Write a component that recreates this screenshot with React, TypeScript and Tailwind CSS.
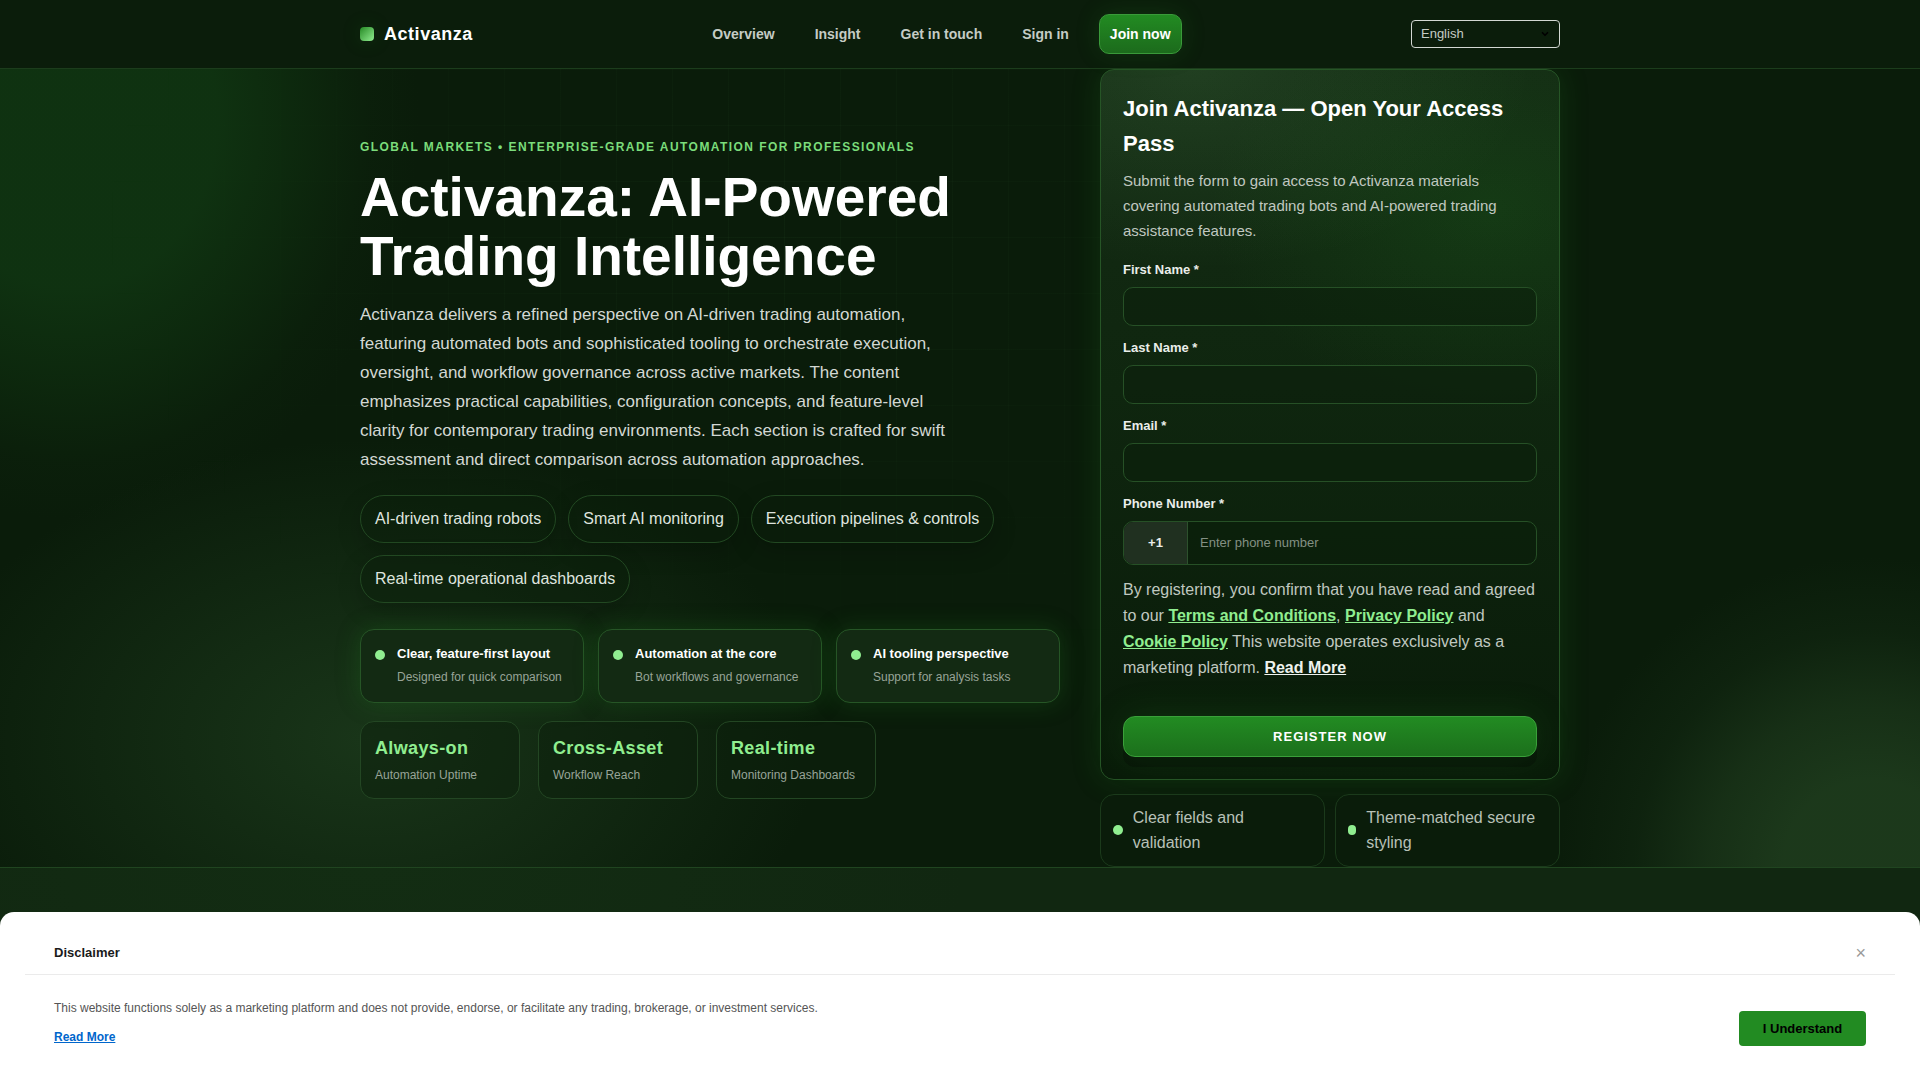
import { ChevronDown } from "lucide-react";

const navLinks = ["Overview", "Insight", "Get in touch", "Sign in"];

const chips = [
  "AI-driven trading robots",
  "Smart AI monitoring",
  "Execution pipelines & controls",
  "Real-time operational dashboards",
];

const features = [
  { title: "Clear, feature-first layout", text: "Designed for quick comparison" },
  { title: "Automation at the core", text: "Bot workflows and governance" },
  { title: "AI tooling perspective", text: "Support for analysis tasks" },
];

const stats = [
  { value: "Always-on", label: "Automation Uptime" },
  { value: "Cross-Asset", label: "Workflow Reach" },
  { value: "Real-time", label: "Monitoring Dashboards" },
];

const fields = [
  { id: "first-name", label: "First Name *", type: "text" },
  { id: "last-name", label: "Last Name *", type: "text" },
  { id: "email", label: "Email *", type: "email" },
];

const Header = () => {
  return (
    <header className="relative z-10 border-b border-[#1c3d1c] bg-[#0b1d0b]">
      <div className="mx-auto flex h-[68px] max-w-[1200px] items-center justify-between">
        <a href="#" className="flex items-center gap-[10px] text-lg font-bold tracking-[0.03em] text-white">
          <span className="h-[14px] w-[14px] rounded bg-linear-135 from-[#228b22] to-[#90ee90] shadow-[0_0_20px_rgba(34,139,34,0.2)]"></span>
          Activanza
        </a>
        <nav className="flex items-center gap-5 text-sm font-bold text-[#c5ccc5]">
          {navLinks.map((link) => (
            <a key={link} href="#" className="px-[10px] py-2">
              {link}
            </a>
          ))}
          <a
            href="#"
            className="flex h-10 items-center rounded-[10px] border border-[#3a9a3a] bg-linear-to-b from-[#228b22] to-[#1c6b1c] px-[10px] text-white shadow-[0_0_24px_rgba(34,139,34,0.2)]"
          >
            Join now
          </a>
        </nav>
        <div className="relative">
          <select
            aria-label="Language"
            className="h-7 w-[149px] appearance-none rounded border border-[#d3d8d3] bg-transparent px-[9px] text-[13px] text-[#c5ccc5]"
          >
            <option>English</option>
          </select>
          <ChevronDown className="pointer-events-none absolute top-[9px] right-[10px] h-[10px] w-[10px] text-black" strokeWidth={4} />
        </div>
      </div>
    </header>
  );
};

const Intro = () => {
  return (
    <div className="self-center">
      <p className="text-xs leading-5 font-bold tracking-[0.12em] text-[#7bdc7b]">
        GLOBAL MARKETS • ENTERPRISE-GRADE AUTOMATION FOR PROFESSIONALS
      </p>
      <h1 className="mt-[11px] max-w-[640px] text-[55px] leading-[59px] font-bold text-white">
        Activanza: AI-Powered Trading Intelligence
      </h1>
      <p className="mt-[14px] max-w-[600px] text-[17px] leading-[29px] text-[#d3d8d3]">
        Activanza delivers a refined perspective on AI-driven trading automation, featuring automated bots and
        sophisticated tooling to orchestrate execution, oversight, and workflow governance across active markets. The
        content emphasizes practical capabilities, configuration concepts, and feature-level clarity for contemporary
        trading environments. Each section is crafted for swift assessment and direct comparison across automation
        approaches.
      </p>
      <ul className="mt-[21px] flex flex-wrap gap-3">
        {chips.map((chip) => (
          <li
            key={chip}
            className="rounded-full border border-[#224822] bg-[#0b1f0b66] px-[14px] py-[10px] text-base leading-[26px] text-[#dfe4df] shadow-[0_8px_24px_rgba(0,0,0,0.2)]"
          >
            {chip}
          </li>
        ))}
      </ul>
      <div className="mt-[26px] grid grid-cols-3 gap-[14px]">
        {features.map((feature) => (
          <div
            key={feature.title}
            className="flex gap-3 rounded-[14px] border border-[#265526] bg-[#132a13] px-[14px] pt-3 pb-[13px] shadow-[0_0_24px_rgba(34,139,34,0.25)]"
          >
            <span className="mt-2 h-[10px] w-[10px] shrink-0 rounded-full bg-[#90ee90]"></span>
            <div className="whitespace-nowrap">
              <h3 className="text-[13px] leading-6 font-bold text-white">{feature.title}</h3>
              <p className="text-xs leading-[23px] text-[#98a498]">{feature.text}</p>
            </div>
          </div>
        ))}
      </div>
      <div className="mt-[18px] flex gap-[18px]">
        {stats.map((stat) => (
          <div
            key={stat.value}
            className="h-[78px] w-[160px] rounded-[14px] border border-[#234623] bg-[#0c200c80] px-[14px] pt-[11px]"
          >
            <p className="text-lg leading-[30px] font-bold tracking-[0.02em] text-[#90ee90]">{stat.value}</p>
            <p className="text-xs leading-6 whitespace-nowrap text-[#98a498]">{stat.label}</p>
          </div>
        ))}
      </div>
    </div>
  );
};

const RegisterForm = () => {
  return (
    <form className="rounded-[14px] border border-[#265526] bg-[radial-gradient(ellipse_340px_200px_at_20%_0%,rgba(144,238,144,0.1),transparent),radial-gradient(ellipse_280px_200px_at_85%_140px,rgba(34,139,34,0.18),transparent),linear-gradient(180deg,#142b14,#0f260f_45%,#091b09)] px-[22px] pt-[21px] pb-[22px] shadow-[0_0_30px_rgba(34,139,34,0.2)]">
      <h2 className="text-[22px] leading-[35px] font-bold text-white">
        Join Activanza — Open Your Access Pass
      </h2>
      <p className="mt-[7px] text-[15px] leading-[25px] text-[#c0c8c0]">
        Submit the form to gain access to Activanza materials covering automated trading bots and AI-powered trading
        assistance features.
      </p>
      <div className="mt-[17px] flex flex-col gap-3">
        {fields.map((field) => (
          <div key={field.id} className="flex flex-col gap-[7px]">
            <label htmlFor={field.id} className="text-[13px] leading-5 font-bold text-[#eaeeea]">
              {field.label}
            </label>
            <input
              id={field.id}
              type={field.type}
              className="h-[39px] rounded-[10px] border border-[#265026] bg-[#0c200c99] px-3 text-[13px] text-white"
            />
          </div>
        ))}
        <div className="flex flex-col gap-[7px]">
          <label htmlFor="phone" className="text-[13px] leading-5 font-bold text-[#eaeeea]">
            Phone Number *
          </label>
          <div className="flex h-11 overflow-hidden rounded-[10px] border border-[#265026] bg-[#0c200cb3]">
            <span className="flex w-16 items-center justify-center border-r border-[#2d512d] bg-[#203020] text-[13px] font-bold text-[#eaeeea]">
              +1
            </span>
            <input
              id="phone"
              type="tel"
              placeholder="Enter phone number"
              className="min-w-0 grow bg-transparent px-3 text-[13px] text-white placeholder:text-[#839083]"
            />
          </div>
        </div>
      </div>
      <p className="mt-3 text-base leading-[26px] text-[#c0c8c0]">
        By registering, you confirm that you have read and agreed to our{" "}
        <a href="#" className="font-bold text-[#90ee90] underline">Terms and Conditions</a>,{" "}
        <a href="#" className="font-bold text-[#90ee90] underline">Privacy Policy</a> and{" "}
        <a href="#" className="font-bold text-[#90ee90] underline">Cookie Policy</a> This website operates exclusively
        as a marketing platform.{" "}
        <a href="#" className="font-bold text-[#eef2ee] underline">Read More</a>
      </p>
      <button
        type="button"
        className="mt-[35px] h-[41px] w-full rounded-xl border border-[#3aa03a] bg-linear-to-b from-[#228b22] to-[#1c701c] text-[13px] font-bold tracking-[1px] text-white shadow-[0_10px_0_rgba(0,0,0,0.2),0_0_36px_rgba(34,139,34,0.2)]"
      >
        REGISTER NOW
      </button>
    </form>
  );
};

const Disclaimer = () => {
  return (
    <aside className="fixed inset-x-0 bottom-0 z-20 rounded-t-[14px] bg-white px-[25px] pt-5 pb-[34px]">
      <div className="flex h-[43px] items-center justify-between border-b border-[#ebebeb] px-[29px]">
        <h2 className="text-[13px] font-bold text-[#1a1a1a]">Disclaimer</h2>
        <button type="button" aria-label="Close" className="text-lg leading-5 text-[#999999]">
          ×
        </button>
      </div>
      <div className="flex items-end justify-between px-[29px] pt-6">
        <div className="text-xs text-[#555555]">
          <p className="leading-[19px]">
            This website functions solely as a marketing platform and does not provide, endorse, or facilitate any
            trading, brokerage, or investment services.
          </p>
          <a href="#" className="mt-[10px] block leading-[18px] font-bold text-[#0066cc] underline">
            Read More
          </a>
        </div>
        <button type="button" className="h-[35px] w-[127px] shrink-0 rounded bg-[#228b22] text-[13px] font-bold text-black">
          I Understand
        </button>
      </div>
    </aside>
  );
};

const App = () => {
  return (
    <div className="min-h-screen bg-[#0a1c0a] font-['Liberation_Sans',Arial,sans-serif]">
      <Header />
      <section className="relative border-b border-[#204520] bg-[radial-gradient(ellipse_350px_400px_at_70px_50px,rgba(16,54,18,0.85)_42%,rgba(15,50,16,0.55)_66%,rgba(14,44,14,0.18)_86%,transparent),radial-gradient(ellipse_450px_300px_at_370px_670px,rgba(50,95,50,0.38),transparent),radial-gradient(circle_310px_at_calc(100%-50px)_100%,rgba(29,58,28,0.95)_28%,rgba(27,54,26,0.75)_52%,rgba(24,50,24,0.3)_76%,transparent)]">
        <div className="pointer-events-none absolute inset-0 bg-[linear-gradient(90deg,rgba(144,238,144,0.03)_1px,transparent_1px),linear-gradient(180deg,rgba(144,238,144,0.03)_1px,transparent_1px)] mask-[radial-gradient(ellipse_700px_500px_at_40%_20%,black,transparent)] bg-size-[56px_56px]"></div>
        <div className="relative mx-auto grid max-w-[1200px] grid-cols-[1fr_460px] gap-10">
          <Intro />
          <div>
            <RegisterForm />
            <ul className="mt-[14px] grid grid-cols-2 gap-[10px] text-base leading-[25px] text-[#b8c1b8]">
              {["Clear fields and validation", "Theme-matched secure styling"].map((item) => (
                <li
                  key={item}
                  className="flex items-center gap-[10px] rounded-[14px] border border-[#1b3a1b] bg-[#0a1c0a] px-3 pt-[10px] pb-[11px]"
                >
                  <span className="h-[10px] w-[10px] shrink rounded-full bg-[#90ee90]"></span>
                  <span>{item}</span>
                </li>
              ))}
            </ul>
          </div>
        </div>
      </section>
      <section className="h-[212px] bg-[radial-gradient(ellipse_600px_300px_at_370px_0px,rgba(30,80,30,0.15),transparent),linear-gradient(#112711,#112711)]"></section>
      <Disclaimer />
    </div>
  );
};

export default App;
